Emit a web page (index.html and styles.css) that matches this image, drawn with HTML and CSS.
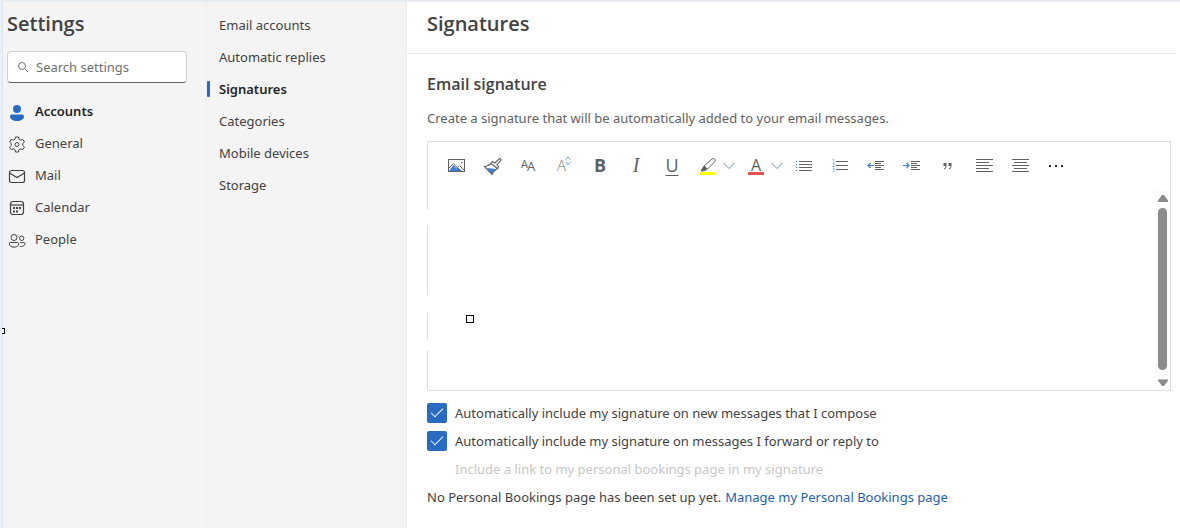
FILE: index.html
```html
<!DOCTYPE html>
<html lang="en">
<head>
    <meta charset="UTF-8" />
    <meta name="viewport" content="width=device-width, initial-scale=1" />
    <title>Settings - Signatures</title>
    <link rel="stylesheet" href="styles.css">
</head>
<body>
    <span class="handle handle-corner"></span>
    <span class="handle handle-top"></span>
    <span class="handle handle-left"></span>

    <div class="settings">
        <aside class="sidebar">
            <h1 class="title">Settings</h1>
            <label class="search">
                <svg width="12" height="12" viewBox="0 0 12 12" fill="none" stroke="#707070"><circle cx="5" cy="5" r="3.500"/><path d="M7.500 7.500l3.500 3.500"/></svg>
                <input type="search" placeholder="Search settings" aria-label="Search settings">
            </label>
            <nav class="nav" aria-label="Settings sections">
                <a class="nav-item active" href="#accounts">
                    <svg width="20" height="20" viewBox="0 0 20 20" fill="#2a6bc2"><circle cx="10" cy="7" r="4"/><path d="M5 12.500h10c1.200 0 2 .8 2 2 0 2.500-3 4.500-7 4.500s-7-2-7-4.500c0-1.200.8-2 2-2z"/></svg>
                    Accounts
                </a>
                <a class="nav-item" href="#general">
                    <svg width="20" height="20" viewBox="0 0 20 20" fill="none" stroke="#424242" stroke-linejoin="round"><path d="M8.500 3h3l.5 2.300 1.500.9 2.300-.8 1.700 2.600-1.800 1.600v1.800l1.800 1.600-1.700 2.600-2.300-.8-1.500.9-.5 2.300h-3L8 15.700l-1.500-.9-2.300.8L2.500 13l1.800-1.600V9.600L2.500 8l1.700-2.600 2.300.8L8 5.300z"/><circle cx="10" cy="10.500" r="2"/></svg>
                    General
                </a>
                <a class="nav-item" href="#mail">
                    <svg width="20" height="20" viewBox="0 0 20 20" fill="none" stroke="#424242" stroke-width="1.200"><rect x="2.500" y="4.500" width="15" height="12" rx="2"/><path d="M2.500 7l7.500 4.500L17.500 7"/></svg>
                    Mail
                </a>
                <a class="nav-item" href="#calendar">
                    <svg width="20" height="20" viewBox="0 0 20 20" fill="none" stroke="#424242" stroke-width="1.200"><rect x="3.500" y="3.500" width="13" height="13" rx="2.500"/><path d="M3.500 7h13"/><path d="M9 10h2M12 10h2M6 10h2M6 13.500h2M9 13.500h2" stroke-width="1.800"/></svg>
                    Calendar
                </a>
                <a class="nav-item" href="#people">
                    <svg width="20" height="20" viewBox="0 0 20 20" fill="none" stroke="#424242"><circle cx="7" cy="7.500" r="3"/><circle cx="14.700" cy="8.300" r="2.200"/><path d="M3.500 12.500h7c.8 0 1.200.5 1.200 1.200 0 2.200-2 3.500-4.700 3.500s-4.700-1.300-4.700-3.500c0-.7.400-1.200 1.200-1.200zM13.200 12.500h3.600c.7 0 1.100.4 1.100 1.100 0 1.800-1.600 2.900-3.600 2.900-.6 0-1.100 0-1.600-.2"/></svg>
                    People
                </a>
            </nav>
        </aside>

        <nav class="subnav" aria-label="Accounts">
            <a class="subnav-item" href="#email-accounts">Email accounts</a>
            <a class="subnav-item" href="#automatic-replies">Automatic replies</a>
            <a class="subnav-item active" href="#signatures">Signatures</a>
            <a class="subnav-item" href="#categories">Categories</a>
            <a class="subnav-item" href="#mobile-devices">Mobile devices</a>
            <a class="subnav-item" href="#storage">Storage</a>
        </nav>

        <main class="content">
            <header class="content-header">
                <h2 class="title">Signatures</h2>
            </header>
            <section class="panel">
                <h3>Email signature</h3>
                <p class="description">Create a signature that will be automatically added to your email messages.</p>

                <div class="editor">
                    <div class="toolbar" role="toolbar" aria-label="Formatting">
                        <button type="button" aria-label="Insert picture">
                            <svg width="20" height="20" viewBox="0 0 20 20" fill="none" stroke="#616161"><path d="M3 15l4.500-6 3 3.500 1.500-1 4 3.500z" fill="#3a7fd9" stroke="none"/><path d="M3 12l4.500-4.500 7 8M11.500 11.500l2-2 5 5"/><rect x="2.500" y="3.500" width="16" height="12"/><path d="M15 6.500h1.500"/></svg>
                        </button>
                        <button type="button" aria-label="Format painter">
                            <svg width="20" height="20" viewBox="0 0 20 20" fill="none" stroke="#616161" stroke-width="1.200"><path d="M5 12l9 1-4.500 5z" fill="#3a7fd9" stroke="none"/><path d="M2.500 10.500c2.500.2 4.500-.8 6.500-3l6.500 5c-2.500 1.500-4.500 3.500-5.500 6z"/><path d="M9 7.500l1.500-2 2.500 1.500 4-4c1.500-.8 2.500.5 1.700 1.700l-3.700 4 1.500 2-1 1.800"/></svg>
                        </button>
                        <button type="button" aria-label="Font">
                            <svg width="20" height="20" viewBox="0 0 20 20" fill="#616161"><text x="3" y="12" font-size="11">A</text><text x="9" y="15" font-size="13">A</text></svg>
                        </button>
                        <button type="button" aria-label="Font size">
                            <svg width="20" height="20" viewBox="0 0 20 20" fill="#737373"><text class="thin" x="3" y="15" font-size="15">A</text><path d="M11.500 3.500L14 1l2.500 2.500M11.500 6L14 8.500 16.500 6" fill="none" stroke="#5b95df"/></svg>
                        </button>
                        <button type="button" class="glyph bold" aria-label="Bold">B</button>
                        <button type="button" class="glyph italic" aria-label="Italic">I</button>
                        <button type="button" class="glyph underline" aria-label="Underline">U</button>
                        <button type="button" class="split" aria-label="Highlight">
                            <svg width="20" height="20" viewBox="0 0 20 20" fill="none" stroke="#616161"><path d="M2 17.500h16" stroke="#ffff00" stroke-width="3"/><path d="M3 15l3-5 3 3-2 1.500z" fill="#616161"/><path d="M6 10l8-7c2-1 4 .5 3 2.500L9.500 13z"/></svg>
                        </button>
                        <button type="button" class="chevron" aria-label="Highlight colors">
                            <svg width="12" height="12" viewBox="0 0 12 12" fill="none" stroke="#6c8cba"><path d="M.5 3L6 8.500 11.500 3"/></svg>
                        </button>
                        <button type="button" class="split" aria-label="Font color">
                            <svg width="20" height="20" viewBox="0 0 20 20" fill="#616161"><path d="M2 17.500h16" stroke="#e8524f" stroke-width="3"/><text x="5" y="15" font-size="16">A</text></svg>
                        </button>
                        <button type="button" class="chevron" aria-label="Font colors">
                            <svg width="12" height="12" viewBox="0 0 12 12" fill="none" stroke="#6c8cba"><path d="M.5 3L6 8.500 11.500 3"/></svg>
                        </button>
                        <button type="button" aria-label="Bullets">
                            <svg width="20" height="20" viewBox="0 0 20 20" stroke="#616161"><path d="M5 5.500h13M5 8.500h13M5 11.500h13M5 14.500h13"/><path d="M2 5.500h1M2 8.500h1M2 11.500h1M2 14.500h1" stroke="#3a7fd9"/></svg>
                        </button>
                        <button type="button" aria-label="Numbering">
                            <svg width="20" height="20" viewBox="0 0 20 20"><path d="M6 5.500h12M6 9.500h12M6 13.500h12" stroke="#616161"/><g fill="#3a7fd9" font-size="5"><text x="2" y="7">1</text><text x="2" y="11">2</text><text x="2" y="16">3</text></g></svg>
                        </button>
                        <button type="button" aria-label="Decrease indent">
                            <svg width="20" height="20" viewBox="0 0 20 20" fill="none" stroke="#616161"><path d="M9 5.500h9M9 7.500h6M9 9.500h9M9 11.500h6M9 13.500h9"/><path d="M8 9.500H2M4.500 7L2 9.500 4.500 12" stroke="#3a7fd9" stroke-width="1.200"/></svg>
                        </button>
                        <button type="button" aria-label="Increase indent">
                            <svg width="20" height="20" viewBox="0 0 20 20" fill="none" stroke="#616161"><path d="M9 5.500h9M9 7.500h6M9 9.500h9M9 11.500h6M9 13.500h9"/><path d="M1 9.500h6M4.500 7L7 9.500 4.500 12" stroke="#3a7fd9" stroke-width="1.200"/></svg>
                        </button>
                        <button type="button" aria-label="Quote">
                            <svg width="20" height="20" viewBox="0 0 20 20" fill="#616161"><path d="M5.500 7h3v3c0 2-1 3-2.500 3.500v-1C7 12 7.500 11.500 7.500 10h-2zM10.500 7h3v3c0 2-1 3-2.500 3.500v-1c1-.5 1.500-1 1.500-2.500h-2z"/></svg>
                        </button>
                        <button type="button" aria-label="Align left">
                            <svg width="20" height="20" viewBox="0 0 20 20" stroke="#616161"><path d="M2 3.500h17M2 6.500h13M2 9.500h17M2 12.500h13M2 15.500h17"/></svg>
                        </button>
                        <button type="button" aria-label="Align center">
                            <svg width="20" height="20" viewBox="0 0 20 20" stroke="#616161"><path d="M2 3.500h17M4 6.500h13M2 9.500h17M4 12.500h13M2 15.500h17"/></svg>
                        </button>
                        <button type="button" aria-label="More options">
                            <svg width="20" height="20" viewBox="0 0 20 20" fill="#242424"><path d="M3 9h2v2H3zM9 9h2v2H9zM15 9h2v2h-2z"/></svg>
                        </button>
                    </div>
                    <div class="editor-body">
                        <div class="editor-text" role="textbox" aria-label="Signature" aria-multiline="true" contenteditable="true"></div>
                        <div class="scrollbar" aria-hidden="true">
                            <svg width="10" height="8" viewBox="0 0 10 8" fill="#8b8b8b"><path d="M4 0h2l4 5.500V7H0V5.500z"/></svg>
                            <div class="thumb"></div>
                            <svg width="10" height="8" viewBox="0 0 10 8" fill="#8b8b8b"><path d="M4 7h2l4-5.500V.5H0v1z"/></svg>
                        </div>
                    </div>
                    <span class="anchor"></span>
                </div>

                <label class="option"><input type="checkbox" checked> Automatically include my signature on new messages that I compose</label>
                <label class="option"><input type="checkbox" checked> Automatically include my signature on messages I forward or reply to</label>
                <p class="option disabled">Include a link to my personal bookings page in my signature</p>
                <p class="option bookings">No Personal Bookings page has been set up yet. <a href="#bookings">Manage my Personal Bookings page</a></p>
            </section>
        </main>
    </div>
</body>
</html>
```
FILE: styles.css
```css
:root {
    --color-text: #424242;
    --color-strong: #242424;
    --color-muted: #616161;
    --color-accent: #2a6bc2;
    --color-pane: #f4f4f4;
    --color-line: #e0e0e0;
}

*, *::before, *::after {
    box-sizing: border-box;
    margin: 0;
    padding: 0;
}

body {
    position: relative;
    min-height: 100vh;
    font-family: "Segoe UI", "Noto Sans", "Open Sans", sans-serif;
    font-size: 13px;
    line-height: 20px;
    color: var(--color-text);
    background: #ffffff;
    border-top: 2px solid #e6ebef;
    border-left: 2px solid #e9f0f8;
}

h1, h2, h3 {
    font-family: "Segoe UI", "Open Sans", sans-serif;
    font-weight: 600;
}

a {
    color: inherit;
    text-decoration: none;
}

svg {
    display: block;
    flex: none;
    overflow: visible;
}

.settings {
    display: flex;
    min-height: calc(100vh - 2px);
}

.title {
    font-size: 20px;
    line-height: 28px;
}

/* Left pane */
.sidebar {
    flex: none;
    width: 205px;
    padding: 8px 19px 0 4px;
    background: var(--color-pane);
    border-left: 1px solid #dbe5f0;
    border-right: 1px solid #ececec;
}

.search {
    display: flex;
    align-items: center;
    gap: 7px;
    height: 32px;
    margin-top: 13px;
    padding: 0 9px;
    background: #ffffff;
    border: 1px solid #d1d1d1;
    border-bottom-color: #616161;
    border-radius: 4px;
}

.search input {
    width: 100%;
    border: 0;
    outline: 0;
    background: none;
    font: inherit;
}

.search input::placeholder {
    color: #707070;
}

.nav {
    margin-top: 12px;
}

.nav-item {
    display: flex;
    align-items: center;
    gap: 8px;
    height: 32px;
}

.nav-item svg {
    margin-top: 2px;
}

.active {
    font-weight: 600;
    color: var(--color-strong);
}

/* Second pane */
.subnav {
    flex: none;
    width: 200px;
    padding-top: 7px;
    background: var(--color-pane);
    border-right: 1px solid #ececec;
}

.subnav-item {
    display: flex;
    align-items: center;
    height: 32px;
    padding-left: 12px;
}

.subnav-item.active::before {
    content: "";
    width: 3px;
    height: 16px;
    margin: 0 9px 0 -12px;
    border-radius: 1px;
    background: var(--color-accent);
}

/* Main pane */
.content {
    flex: 1;
    min-width: 0;
}

.content-header {
    margin-right: 4px;
    padding: 8px 20px 15px;
    border-bottom: 1px solid #ececec;
}

.panel {
    padding: 20px 9px 20px 20px;
}

.panel h3 {
    font-size: 16px;
    line-height: 20px;
}

.description {
    margin: 14px 0 13px;
    color: var(--color-muted);
}

/* The left edge is broken into four pieces */
.editor {
    position: relative;
    display: flex;
    flex-direction: column;
    height: 250px;
    margin-bottom: 8px;
    padding-left: 1px;
    border: 1px solid var(--color-line);
    border-left: 0;
    background: linear-gradient(var(--color-line) 68px, transparent 68px 84px, var(--color-line) 84px 153px, transparent 153px 171px, var(--color-line) 171px 198px, transparent 198px 208px, var(--color-line) 208px) no-repeat left / 1px 100%;
}

.toolbar {
    display: flex;
    height: 48px;
    padding-left: 10px;
}

.toolbar button {
    display: flex;
    align-items: center;
    justify-content: center;
    flex: none;
    width: 36px;
    border: 0;
    background: none;
    color: #616161;
    font-family: "Open Sans", sans-serif;
}

.toolbar .split {
    width: 33px;
    padding-right: 5px;
    padding-left: 8px;
}

.toolbar .chevron {
    width: 15px;
    padding-right: 3px;
}

.toolbar .glyph {
    padding-bottom: 2px;
    font-size: 18px;
}

.toolbar .bold {
    font-weight: 700;
}

.toolbar .italic {
    font-family: "Liberation Serif", serif;
    font-size: 20px;
    font-style: italic;
}

.toolbar .underline {
    text-decoration: underline;
    text-underline-offset: 3px;
    text-decoration-thickness: 1px;
}

.thin {
    font-weight: 300;
}

.editor-body {
    display: flex;
    flex: 1;
}

.editor-text {
    flex: 1;
    outline: 0;
}

.scrollbar {
    display: flex;
    flex-direction: column;
    align-items: center;
    gap: 5px;
    width: 15px;
    padding: 5px 0 3px;
    background: #fbfbfb;
}

.thumb {
    flex: 1;
    width: 9px;
    margin-bottom: 4px;
    border-radius: 5px;
    background: #8b8b8b;
}

/* Options under the editor */
.option {
    display: flex;
    align-items: center;
    gap: 8px;
    height: 28px;
}

.option input {
    appearance: none;
    width: 20px;
    height: 20px;
    border-radius: 2px;
    background: #ffffff;
    border: 1px solid var(--color-muted);
}

.option input:checked {
    display: grid;
    place-items: center;
    border: 0;
    background: var(--color-accent);
}

.option input:checked::before {
    content: "";
    width: 12px;
    height: 6px;
    margin-top: -4px;
    border: solid #ffffff;
    border-width: 0 0 1px 1px;
    transform: rotate(-45deg);
}

.disabled {
    padding-left: 28px;
    color: #c7c7c7;
}

.bookings {
    gap: 4px;
}

.bookings a {
    color: #215fae;
}

/* Resize handles of the selected frame */
.handle {
    position: absolute;
    background: #ffffff;
    border: 1px solid #000000;
}

.handle-corner {
    top: -2px;
    left: -2px;
    width: 3px;
    height: 2px;
}

.handle-top {
    top: -2px;
    left: calc(56.5% - 4px);
    width: 6px;
    height: 2px;
}

.handle-left {
    top: 326px;
    left: -2px;
    z-index: 1;
    width: 5px;
    height: 6px;
    border-left: 0;
}

.anchor {
    position: absolute;
    top: 173px;
    left: 39px;
    width: 8px;
    height: 8px;
    border: 1px solid #000000;
}
```
